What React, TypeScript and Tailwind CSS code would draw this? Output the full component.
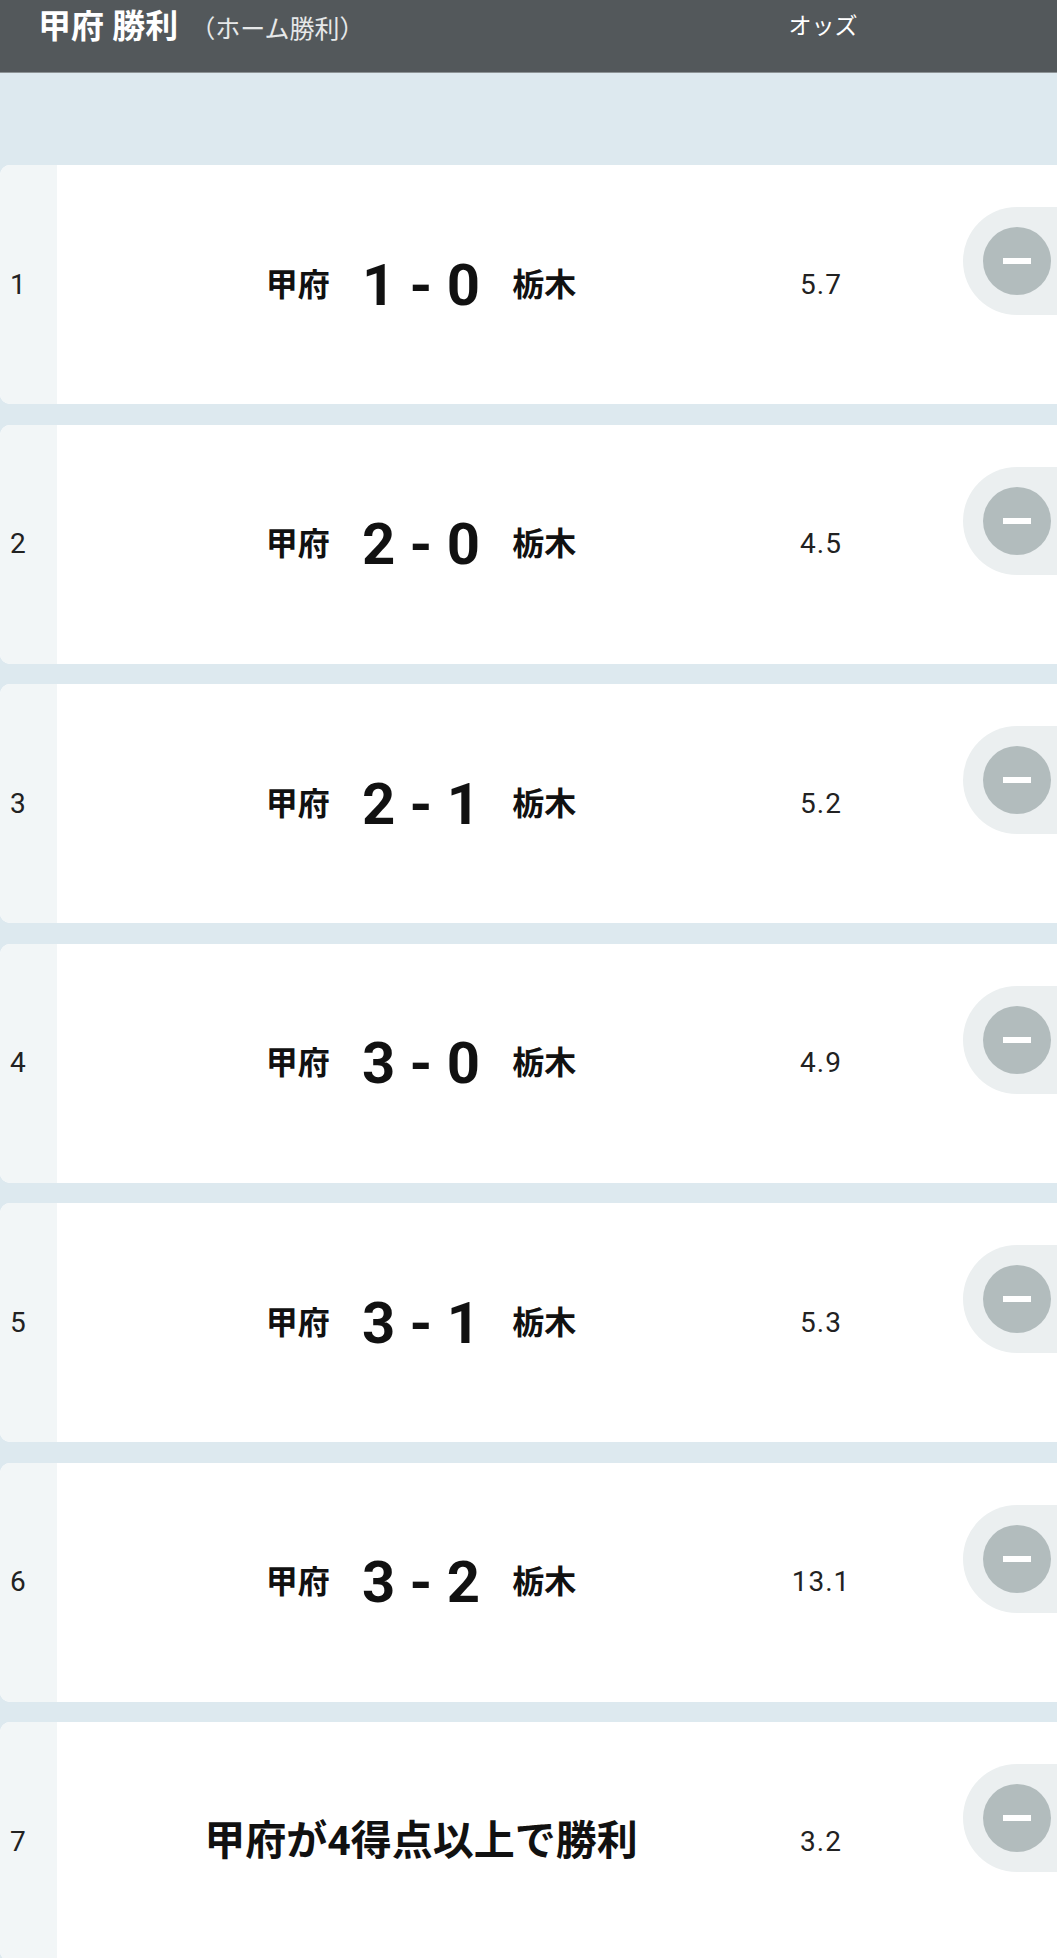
import React from "react";

const rows: { n: number; a?: string; b?: string; text?: string; odds: string }[] = [
  { n: 1, a: "1", b: "0", odds: "5.7" },
  { n: 2, a: "2", b: "0", odds: "4.5" },
  { n: 3, a: "2", b: "1", odds: "5.2" },
  { n: 4, a: "3", b: "0", odds: "4.9" },
  { n: 5, a: "3", b: "1", odds: "5.3" },
  { n: 6, a: "3", b: "2", odds: "13.1" },
  { n: 7, text: "甲府が4得点以上で勝利", odds: "3.2" },
];

function MinusButton() {
  return (
    <div className="self-start mt-[42px] ml-[106px] flex-1 h-[108px] rounded-l-full bg-[#ebeff0] pl-[20px] py-[20px] flex items-start">
      <div className="w-[68px] h-[68px] rounded-full bg-[#b2bcbd] flex items-center justify-center shrink-0">
        <div className="w-[28px] h-[6px] bg-white" />
      </div>
    </div>
  );
}

function Row({ r }: { r: (typeof rows)[number] }) {
  return (
    <div className="h-[239px] flex bg-white rounded-l-[10px] overflow-hidden">
      <div className="w-[57px] shrink-0 bg-[#f2f6f7] flex items-center pl-[10px] text-[28px] leading-none text-[#222]">
        {r.n}
      </div>
      <div className="w-[728px] shrink-0 flex items-center justify-center text-[#111]">
        {r.text ? (
          <span className="text-[41px] leading-none font-bold whitespace-nowrap">{r.text}</span>
        ) : (
          <div className="flex items-center gap-[32px]">
            <span className="text-[32px] leading-none font-bold">甲府</span>
            <span className="text-[58px] leading-none font-bold whitespace-pre">{`${r.a} - ${r.b}`}</span>
            <span className="text-[32px] leading-none font-bold">栃木</span>
          </div>
        )}
      </div>
      <div className="w-[72px] shrink-0 flex items-center justify-center text-[28px] leading-none tracking-[1px] text-[#222] whitespace-nowrap">
        {r.odds}
      </div>
      <MinusButton />
    </div>
  );
}

export default function App() {
  return (
    <div
      className="w-[1057px] h-[1958px] overflow-hidden bg-[#dde9ef]"
      style={{ fontFamily: "Roboto, 'Noto Sans CJK JP', sans-serif" }}
    >
      <div className="h-[73px] bg-[#53585b] border-b border-[#8d9396] flex items-start">
        <div className="w-[785px] shrink-0 flex items-baseline pl-[38px] pt-[10px] [text-spacing-trim:space-all]">
          <span className="text-[33px] leading-[34px] font-bold text-white">甲府 勝利</span>
          <span className="ml-[12px] text-[25px] leading-none text-[#e6e8e9] whitespace-nowrap">（ホーム勝利）</span>
        </div>
        <div className="w-[76px] shrink-0 text-center text-[23px] leading-none text-white pt-[15px] whitespace-nowrap">
          オッズ
        </div>
      </div>
      <div className="pt-[92px] flex flex-col gap-[20.5px]">
        {rows.map((r) => (
          <Row key={r.n} r={r} />
        ))}
      </div>
    </div>
  );
}
